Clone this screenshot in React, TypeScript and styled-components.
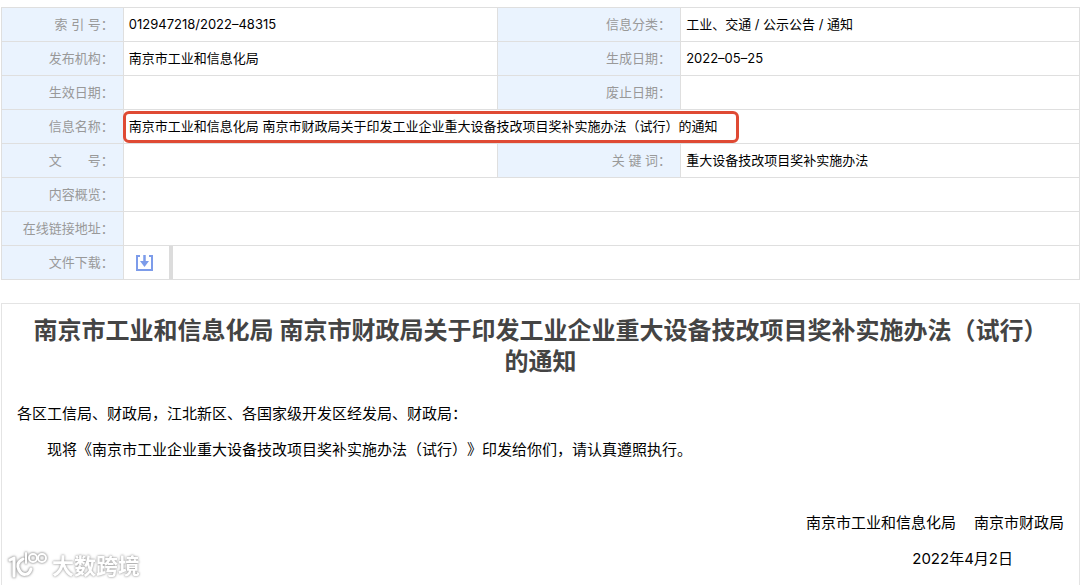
import React from "react";
import styled, { createGlobalStyle } from "styled-components";

const LINE = "#dfdfdf";

const GlobalStyle = createGlobalStyle`
  * { box-sizing: border-box; }
  body {
    margin: 0;
    background: #fff;
    color: #000;
    font-family: Inter, "Noto Sans CJK SC", sans-serif;
    text-spacing-trim: space-all;
  }
`;

const Page = styled.main`
  display: flex;
  flex-direction: column;
  min-height: 100vh;
  padding: 7px 0 0 1px;
`;

const InfoTable = styled.table`
  width: 100%;
  table-layout: fixed;
  border-collapse: collapse;
  font-size: 13px;
  line-height: 20px;
`;

const Col = styled.col<{ $share: string }>`
  width: ${(p) => p.$share};
`;

const Label = styled.th`
  height: 34px;
  padding: 0 9px 2px 0;
  border: 1px solid ${LINE};
  background: #eaf3fe;
  color: #999;
  font-weight: 400;
  text-align: right;
  white-space: pre;
`;

const Value = styled.td`
  height: 34px;
  padding: 0 5px 2px;
  border: 1px solid ${LINE};
  white-space: nowrap;
`;

const DownloadValue = styled(Value)`
  padding: 0;
`;

const Highlight = styled.span`
  position: relative;
  &::after {
    content: "";
    position: absolute;
    inset: -7px -22px -9px -6px;
    border: 3px solid #df4a34;
    border-radius: 6px;
  }
`;

const DownloadSlot = styled.div`
  display: flex;
  align-items: center;
  width: 49px;
  height: 33px;
  padding-left: 11px;
  border-right: 4px solid #dcdcdc;
`;

const DownloadButton = styled.button`
  display: flex;
  padding: 0;
  border: 0;
  background: none;
  color: #7d9cea;
  cursor: pointer;
`;

const Article = styled.article`
  flex: 1;
  margin-top: 23px;
  padding: 11px 15px 0;
  border: 1px solid #e4e4e4;
  border-bottom: 0;
  font-size: 15px;
  line-height: 36px;
`;

const Title = styled.h1`
  margin: 0 0 19px;
  padding: 0 10px;
  color: #444;
  font-size: 24px;
  font-weight: 600;
  line-height: 31px;
  text-align: center;
`;

const Paragraph = styled.p<{ $indent?: boolean }>`
  margin: 0;
  text-indent: ${(p) => (p.$indent ? "2em" : "0")};
`;

const Signature = styled.footer`
  margin-top: 37px;
  text-align: right;
`;

const Signers = styled.p`
  display: flex;
  justify-content: flex-end;
  gap: 18px;
  margin: 0;
`;

const SignDate = styled.p`
  margin: 0;
  padding-right: 51px;
`;

const Watermark = styled.div`
  position: fixed;
  left: 8px;
  bottom: 4px;
  display: flex;
  align-items: center;
  gap: 4px;
  color: #fff;
  font-size: 22px;
  font-weight: 700;
  line-height: 30px;
  text-shadow: 0 0 2px #999, 0 0 3px #bbb;
  svg { filter: drop-shadow(0 0 1px #999) drop-shadow(0 0 1px #bbb); }
`;

function DownloadIcon() {
  return (
    <svg width="19" height="18" viewBox="0 0 19 18" fill="none" stroke="currentColor" strokeWidth="2" aria-hidden="true">
      <path d="M5 2H2V16H17V2H14" />
      <path d="M9.500 1V9" strokeWidth="2.500" />
      <path d="M5 7H14L9.500 13Z" fill="currentColor" stroke="none" />
    </svg>
  );
}

function WatermarkLogo() {
  return (
    <svg width="40" height="30" viewBox="0 0 40 30" fill="none" stroke="currentColor" strokeWidth="3" strokeLinecap="round" strokeLinejoin="round" aria-hidden="true">
      <path d="M2 9L6 7V25" />
      <path d="M15 8C9 11 9 15 11 19C14 25 21 25 23 18" />
      <path d="M18 2V12" strokeWidth="2" />
      <circle cx="25" cy="7" r="4" strokeWidth="2" />
      <circle cx="34" cy="7" r="4" strokeWidth="2" />
    </svg>
  );
}

interface PairRow {
  left: [string, string];
  right: [string, string];
}

function Pair({ left, right }: PairRow) {
  return (
    <tr>
      <Label scope="row">{left[0]}</Label>
      <Value>{left[1]}</Value>
      <Label scope="row">{right[0]}</Label>
      <Value>{right[1]}</Value>
    </tr>
  );
}

const TITLE = "南京市工业和信息化局 南京市财政局关于印发工业企业重大设备技改项目奖补实施办法（试行）的通知";

export default function App() {
  return (
    <Page>
      <GlobalStyle />
      <InfoTable>
        <colgroup>
          <Col $share="11.3%" />
          <Col $share="34.7%" />
          <Col $share="17%" />
          <Col $share="37%" />
        </colgroup>
        <tbody>
          <Pair left={["索 引 号：", "012947218/2022–48315"]} right={["信息分类：", "工业、交通 / 公示公告 / 通知"]} />
          <Pair left={["发布机构：", "南京市工业和信息化局"]} right={["生成日期：", "2022–05–25"]} />
          <Pair left={["生效日期：", ""]} right={["废止日期：", ""]} />
          <tr>
            <Label scope="row">信息名称：</Label>
            <Value colSpan={3}><Highlight>{TITLE}</Highlight></Value>
          </tr>
          <Pair left={["文\u3000\u3000号：", ""]} right={["关 键 词：", "重大设备技改项目奖补实施办法"]} />
          <tr>
            <Label scope="row">内容概览：</Label>
            <Value colSpan={3} />
          </tr>
          <tr>
            <Label scope="row">在线链接地址：</Label>
            <Value colSpan={3} />
          </tr>
          <tr>
            <Label scope="row">文件下载：</Label>
            <DownloadValue colSpan={3}>
              <DownloadSlot>
                <DownloadButton type="button" aria-label="文件下载">
                  <DownloadIcon />
                </DownloadButton>
              </DownloadSlot>
            </DownloadValue>
          </tr>
        </tbody>
      </InfoTable>
      <Article>
        <Title>{TITLE}</Title>
        <Paragraph>各区工信局、财政局，江北新区、各国家级开发区经发局、财政局：</Paragraph>
        <Paragraph $indent>现将《南京市工业企业重大设备技改项目奖补实施办法（试行）》印发给你们，请认真遵照执行。</Paragraph>
        <Signature>
          <Signers>
            <span>南京市工业和信息化局</span>
            <span>南京市财政局</span>
          </Signers>
          <SignDate>2022年4月2日</SignDate>
        </Signature>
      </Article>
      <Watermark>
        <WatermarkLogo />
        <span>大数跨境</span>
      </Watermark>
    </Page>
  );
}
